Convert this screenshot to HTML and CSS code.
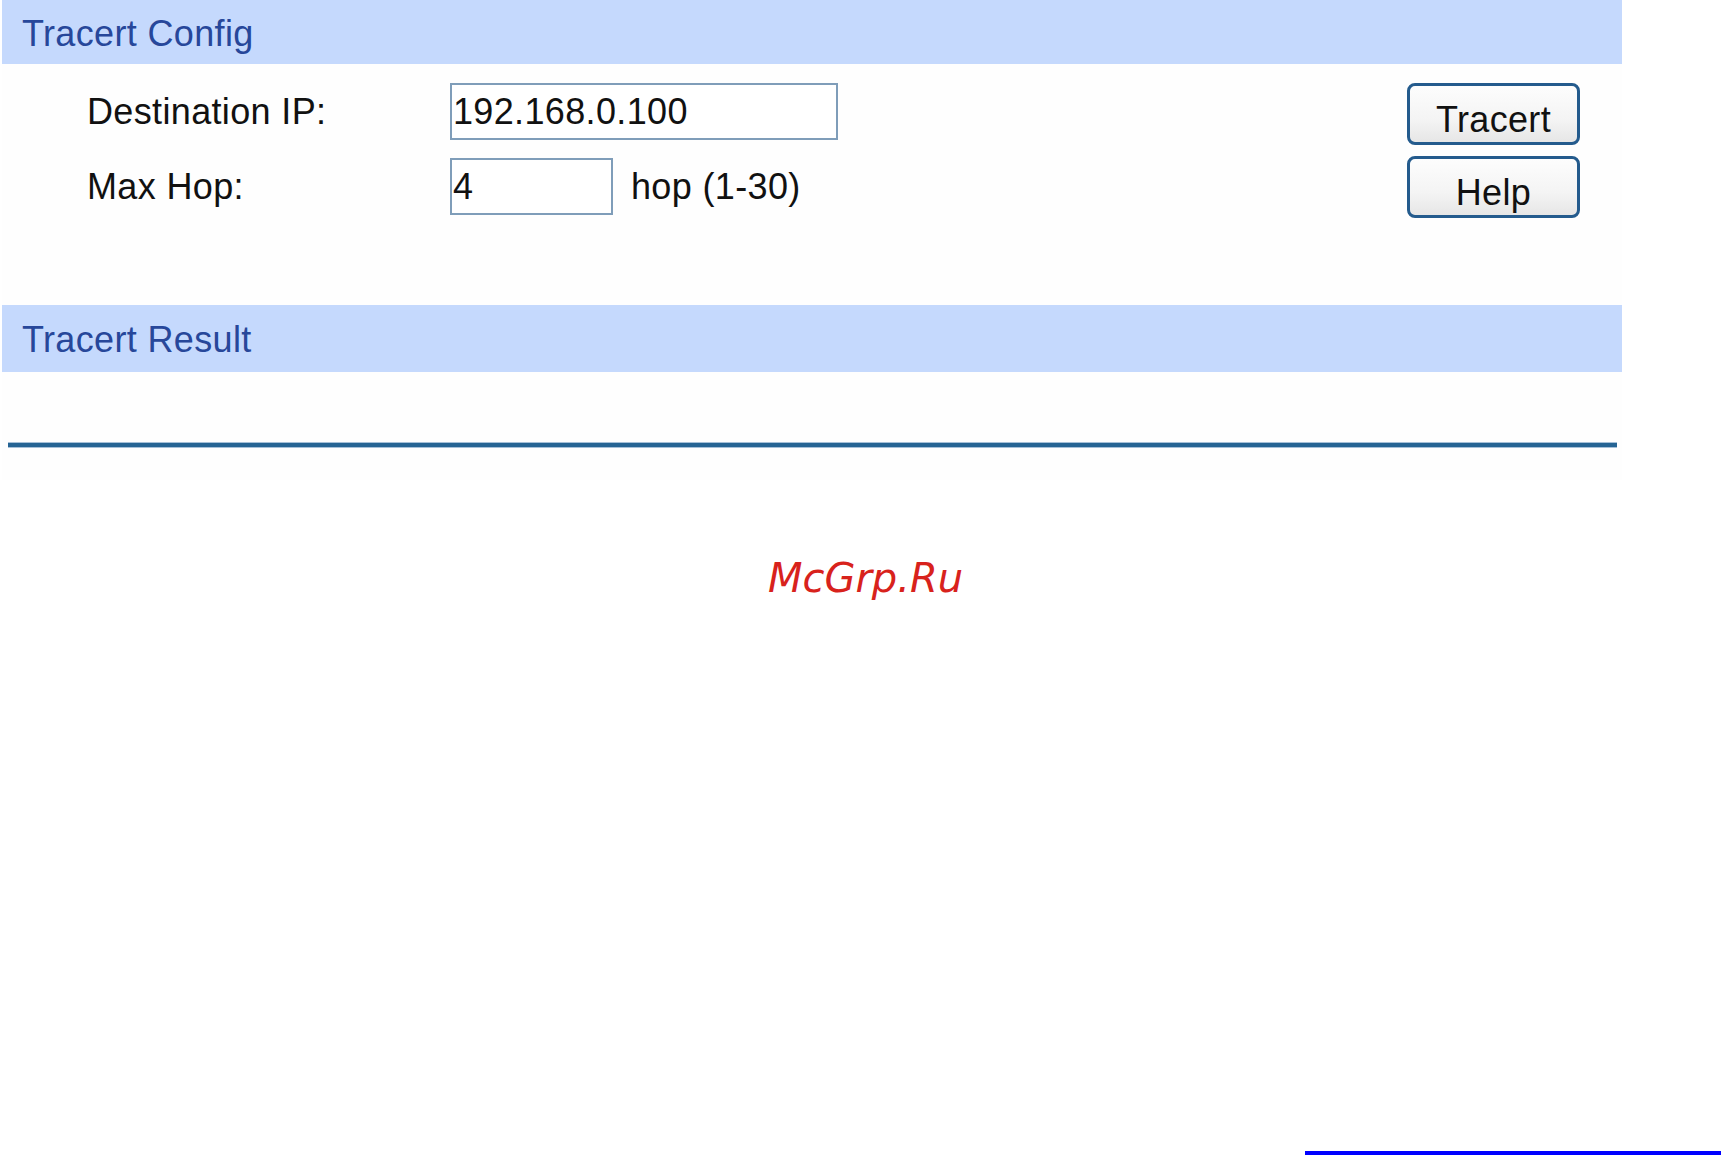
FILE: index.html
```html
<!DOCTYPE html>
<html lang="en">
<head>
<meta charset="utf-8">
<title>Tracert</title>
<link rel="stylesheet" href="styles.css">
</head>
<body>
<div class="panel">
  <div class="section-head">Tracert Config</div>
  <div class="config">
    <div class="form">
      <div class="row">
        <label class="label" for="dip">Destination IP:</label>
        <input id="dip" class="field field-ip" type="text" value="192.168.0.100">
      </div>
      <div class="row">
        <label class="label" for="hop">Max Hop:</label>
        <input id="hop" class="field field-hop" type="text" value="4">
        <span class="hint">hop (1-30)</span>
      </div>
    </div>
    <div class="buttons">
      <button class="btn" type="button">Tracert</button>
      <button class="btn" type="button">Help</button>
    </div>
  </div>
  <div class="section-head section-head-2">Tracert Result</div>
  <div class="result">
    <div class="rule"></div>
  </div>
</div>
<div class="watermark">McGrp.Ru</div>
<div class="footer-line"></div>
</body>
</html>
```
FILE: styles.css
```css
html, body {
  margin: 0;
  padding: 0;
  height: 100%;
  background: #ffffff;
}

body {
  display: flex;
  flex-direction: column;
  overflow: hidden;
  font-family: "Liberation Sans", Arial, sans-serif;
  color: #111111;
  letter-spacing: 0.35px;
}

.panel {
  margin-left: 2px;
  width: 1620px;
  background: #fefefe;
}

.section-head {
  box-sizing: border-box;
  height: 64px;
  padding: 14px 0 0 20px;
  font-size: 36px;
  line-height: 40px;
  color: #27479a;
  background: #c5d9fd;
}

.section-head-2 {
  height: 67px;
  padding-top: 15px;
}

.config {
  box-sizing: border-box;
  height: 241px;
  display: flex;
  align-items: flex-start;
  padding: 19px 42px 0 85px;
}

.form {
  display: flex;
  flex-direction: column;
  gap: 18px;
}

.row {
  display: flex;
  align-items: center;
  height: 57px;
}

.label {
  width: 363px;
  font-size: 36px;
  line-height: 40px;
  color: #111111;
}

.field {
  box-sizing: border-box;
  height: 57px;
  margin: 0;
  padding: 0 0 0 1px;
  border: 2px solid #7f9db9;
  background: #ffffff;
  font-family: "Liberation Sans", Arial, sans-serif;
  font-size: 36px;
  letter-spacing: 0.35px;
  color: #111111;
  outline: none;
}

.field-ip {
  width: 388px;
}

.field-hop {
  width: 163px;
}

.hint {
  margin-left: 18px;
  font-size: 36px;
  line-height: 40px;
}

.buttons {
  margin-left: auto;
  display: flex;
  flex-direction: column;
  gap: 11px;
}

.btn {
  box-sizing: border-box;
  width: 173px;
  height: 62px;
  margin: 0;
  padding: 14px 0 0 0;
  border: 3px solid #245b8d;
  border-radius: 8px;
  background: linear-gradient(#fdfdfd 0%, #f4f4f4 60%, #e6e6e6 100%);
  font-family: "Liberation Sans", Arial, sans-serif;
  font-size: 36px;
  line-height: 40px;
  letter-spacing: 0.35px;
  color: #111111;
  text-align: center;
  display: flex;
  justify-content: center;
  align-items: flex-start;
}

.result {
  box-sizing: border-box;
  height: 108px;
  padding: 70px 5px 0 6px;
}

.rule {
  height: 4px;
  background: #266494;
  border-top: 1px solid #a6c0d8;
  border-bottom: 1px solid #a6c0d8;
}

.watermark {
  margin-top: 75px;
  padding-left: 10px;
  text-align: center;
  font-family: "DejaVu Sans", sans-serif;
  font-style: oblique;
  font-size: 40px;
  line-height: 47px;
  letter-spacing: 0;
  color: #d8221c;
}

.footer-line {
  margin-top: auto;
  align-self: flex-end;
  width: 416px;
  height: 4px;
  background: #0000ff;
}
```
